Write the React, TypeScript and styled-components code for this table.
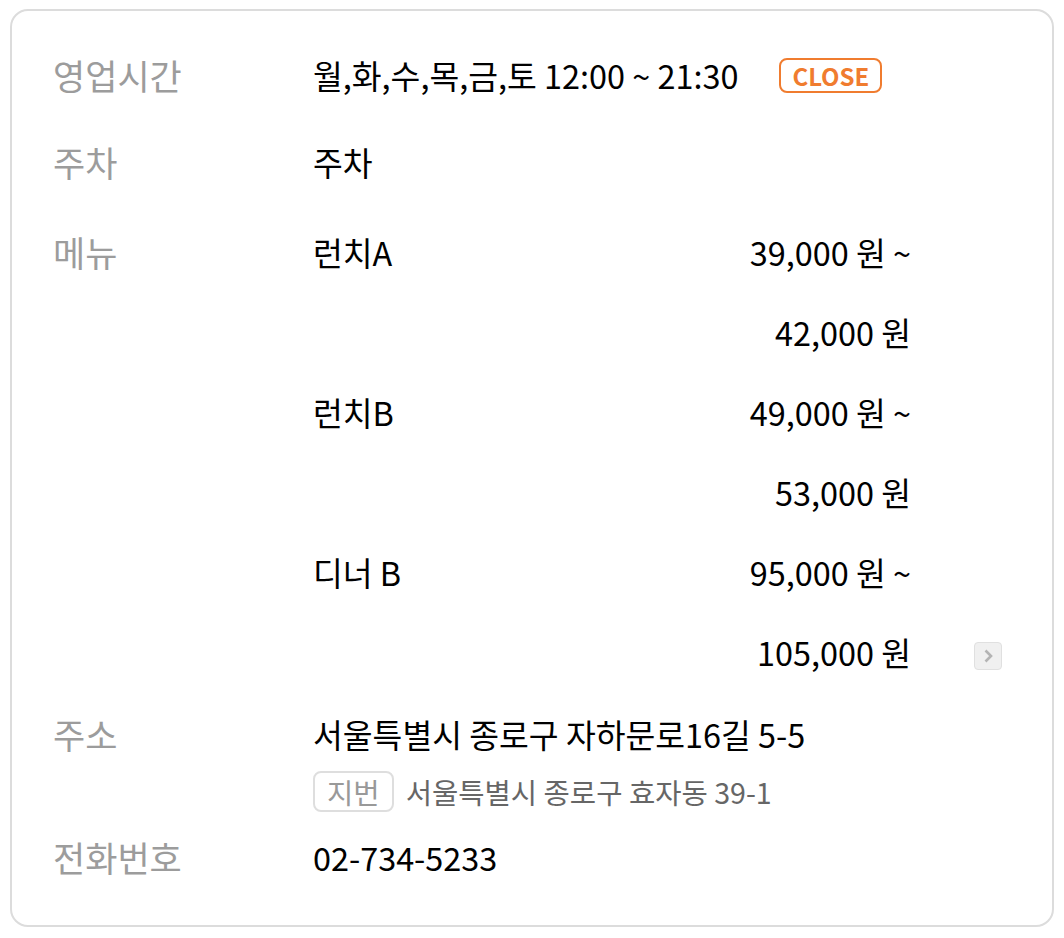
import React from 'react'
import styled, { createGlobalStyle } from 'styled-components'

const GlobalStyle = createGlobalStyle`
body{
    margin: 0;
    background: #fff;
    font-family: "Noto Sans CJK KR", "Noto Sans", sans-serif;
    color: #000;
}
`
const Card = styled.div`
    margin: 9px 10px 0;
    width: 1044px;
    height: 918px;
    box-sizing: border-box;
    border: 2px solid #dcdcdc;
    border-radius: 18px;
    padding: 44px 41px 0;
`
const InfoRow = styled.div<{ $gap?: number }>`
    display: grid;
    grid-template-columns: 260px 1fr;
    margin-bottom: ${p => p.$gap ?? 46}px;
    line-height: 40px;
`
const Label = styled.div`
    font-size: 35px;
    color: #9c9c9c;
`
const Value = styled.div`
    font-size: 32.4px;
    color: #000;
    display: flex;
    flex-direction: column;
`
const Line = styled.div`
    display: flex;
    align-items: center;
`
const StateBadge = styled.span`
    margin-left: 41px;
    height: 35px;
    box-sizing: border-box;
    padding: 0 11px;
    border: 2px solid #f07c2f;
    border-radius: 8px;
    color: #f07c2f;
    font-size: 24px;
    font-weight: 700;
    line-height: 31px;
`
const MenuWrap = styled.div`
    display: flex;
    align-items: flex-end;
`
const MenuList = styled.div`
    width: 598px;
    display: grid;
    grid-template-columns: 1fr auto;
    row-gap: 40px;
`
const Price = styled.div`
    text-align: right;
`
const MoreButton = styled.button`
    margin: 0 0 2px 63px;
    width: 28px;
    height: 28px;
    padding: 0;
    border: 1px solid #e0e0e0;
    border-radius: 4px;
    background: #f0f0f0;
    display: flex;
    align-items: center;
    justify-content: center;
    svg{
        display: block;
    }
`
const SubAddress = styled.div`
    margin-top: 17px;
    display: flex;
    align-items: center;
    font-size: 28.6px;
    color: #666;
`
const JibunTag = styled.span`
    height: 41px;
    box-sizing: border-box;
    padding: 0 12px;
    border: 2px solid #dedede;
    border-radius: 8px;
    color: #999;
    line-height: 37px;
    margin-right: 12px;
`

const menus = [
    { name: '런치A', prices: ['39,000 원 ~', '42,000 원'] },
    { name: '런치B', prices: ['49,000 원 ~', '53,000 원'] },
    { name: '디너 B', prices: ['95,000 원 ~', '105,000 원'] },
]

export default function App() {
    return (
        <>
            <GlobalStyle />
            <Card>
                <InfoRow $gap={47}>
                    <Label>영업시간</Label>
                    <Value>
                        <Line>
                            월,화,수,목,금,토 12:00 ~ 21:30
                            <StateBadge>CLOSE</StateBadge>
                        </Line>
                    </Value>
                </InfoRow>
                <InfoRow $gap={50}>
                    <Label>주차</Label>
                    <Value>주차</Value>
                </InfoRow>
                <InfoRow $gap={42}>
                    <Label>메뉴</Label>
                    <Value>
                        <MenuWrap>
                            <MenuList>
                                {menus.map(m => (
                                    <React.Fragment key={m.name}>
                                        <div>{m.name}</div>
                                        <Price>{m.prices[0]}</Price>
                                        <div />
                                        <Price>{m.prices[1]}</Price>
                                    </React.Fragment>
                                ))}
                            </MenuList>
                            <MoreButton aria-label="더보기">
                                <svg width="12" height="16" viewBox="0 0 12 16">
                                    <path d="M3.5 2.5 L9 8 L3.5 13.5" fill="none" stroke="#b4b4b4" strokeWidth="2.6" />
                                </svg>
                            </MoreButton>
                        </MenuWrap>
                    </Value>
                </InfoRow>
                <InfoRow $gap={25}>
                    <Label>주소</Label>
                    <Value>
                        <div>서울특별시 종로구 자하문로16길 5-5</div>
                        <SubAddress>
                            <JibunTag>지번</JibunTag>
                            서울특별시 종로구 효자동 39-1
                        </SubAddress>
                    </Value>
                </InfoRow>
                <InfoRow $gap={0}>
                    <Label>전화번호</Label>
                    <Value>02-734-5233</Value>
                </InfoRow>
            </Card>
        </>
    )
}
